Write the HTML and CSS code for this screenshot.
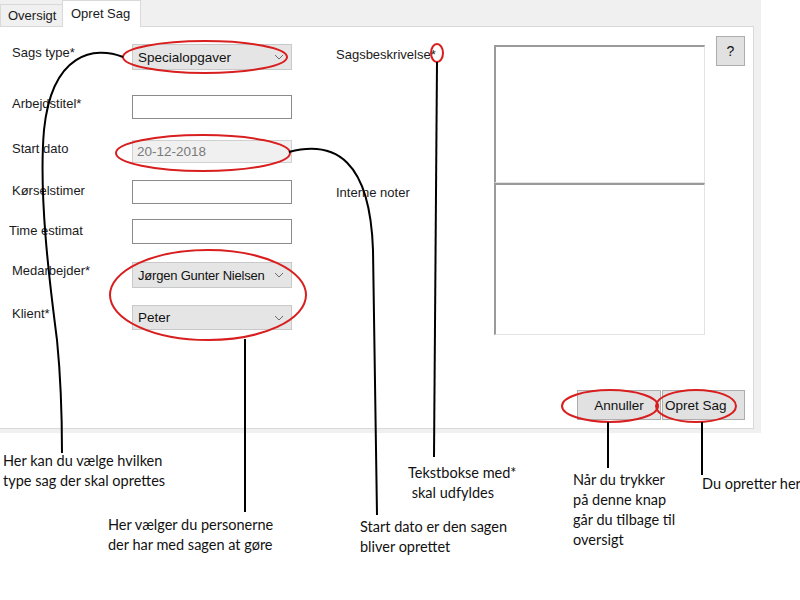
FILE: index.html
```html
<!DOCTYPE html>
<html lang="da">
<head>
<meta charset="utf-8">
<title>Opret Sag</title>
<link rel="stylesheet" href="styles.css">
</head>
<body>
<div class="stage">
  <div class="window">
    <div class="tabs">
      <div class="tab">Oversigt</div>
      <div class="tab active">Opret Sag</div>
    </div>
    <div class="page">
      <div class="top">
        <div class="form-left">
          <div class="row r1"><span class="lbl">Sags type*</span><div class="combo"><span>Specialopgaver</span><svg class="chev" viewBox="0 0 10 6"><path d="M1 1 L5 5 L9 1"/></svg></div></div>
          <div class="row r2"><span class="lbl">Arbejdstitel*</span><div class="text"></div></div>
          <div class="row r3"><span class="lbl">Start dato</span><div class="text disabled">20-12-2018</div></div>
          <div class="row r4"><span class="lbl">Kørselstimer</span><div class="text"></div></div>
          <div class="row r5"><span class="lbl shift">Time estimat</span><div class="text"></div></div>
          <div class="row r6"><span class="lbl">Medarbejder*</span><div class="combo"><span class="tight">Jørgen Gunter Nielsen</span><svg class="chev" viewBox="0 0 10 6"><path d="M1 1 L5 5 L9 1"/></svg></div></div>
          <div class="row r7"><span class="lbl">Klient*</span><div class="combo"><span>Peter</span><svg class="chev" viewBox="0 0 10 6"><path d="M1 1 L5 5 L9 1"/></svg></div></div>
        </div>
        <div class="mid">
          <span class="mlbl m1">Sagsbeskrivelse*</span>
          <span class="mlbl m2">Interne noter</span>
        </div>
        <div class="boxes">
          <div class="area a1"></div>
          <div class="area a2"></div>
        </div>
        <div class="help"><div class="btn qbtn">?</div></div>
      </div>
      <div class="actions">
        <div class="btn act">Annuller</div>
        <div class="btn act create">Opret Sag</div>
      </div>
    </div>
  </div>

  <svg class="marks" viewBox="0 0 800 600" width="800" height="600">
    <g class="red">
      <ellipse cx="205" cy="57" rx="82" ry="16"/>
      <ellipse cx="203" cy="153" rx="87" ry="18"/>
      <ellipse cx="208" cy="295" rx="98" ry="45"/>
      <ellipse cx="437" cy="53" rx="6" ry="9"/>
      <ellipse cx="610" cy="406" rx="48" ry="16"/>
      <ellipse cx="696" cy="406" rx="40" ry="16"/>
    </g>
    <g class="blk">
      <path d="M123 57 C95 46 52 52 44 130 C38 200 52 300 57 340 C61 380 62 420 62 453"/>
      <path d="M289 152 C335 140 370 160 373 250 L377 515"/>
      <path d="M437 62 L434 457"/>
      <path d="M245 339 L245 512"/>
      <path d="M608 422 L608 468"/>
      <path d="M702 422 L702 475"/>
    </g>
  </svg>

  <p class="note n1">Her kan du vælge hvilken<br>type sag der skal oprettes</p>
  <p class="note n2">Her vælger du personerne<br>der har med sagen at gøre</p>
  <p class="note n3">Start dato er den sagen<br>bliver oprettet</p>
  <p class="note n4">Tekstbokse med*<br>&nbsp;skal udfyldes</p>
  <p class="note n5">Når du trykker<br>på denne knap<br>går du tilbage til<br>oversigt</p>
  <p class="note n6">Du opretter her</p>
</div>
</body>
</html>
```
FILE: styles.css
```css
html, body {
  margin: 0;
  padding: 0;
  background: #ffffff;
  overflow: hidden;
}

.stage {
  position: relative;
  width: 800px;
  height: 600px;
  overflow: hidden;
  font-family: "Liberation Sans", Arial, sans-serif;
  font-size: 13px;
  color: #1a1a1a;
}

.window {
  width: 761px;
  height: 433px;
  background: #f0f0f0;
}

.tabs {
  display: flex;
  align-items: flex-end;
  height: 26px;
  position: relative;
  z-index: 2;
}

.tab {
  height: 22px;
  box-sizing: border-box;
  width: 63px;
  border: 1px solid #d9d9d9;
  border-bottom: none;
  background: #f0f0f0;
  padding-left: 7px;
  line-height: 22px;
  font-size: 13px;
}

.tab.active {
  height: 27px;
  width: 79px;
  margin-left: -1px;
  margin-bottom: -1px;
  background: #ffffff;
  padding-left: 8px;
  line-height: 25px;
}

.page {
  width: 754px;
  height: 403px;
  box-sizing: border-box;
  border: 1px solid #d9d9d9;
  border-left: none;
  background: #ffffff;
  display: flex;
  flex-direction: column;
}

.top {
  display: flex;
}

.form-left {
  width: 336px;
  box-sizing: border-box;
  padding-left: 12px;
  display: flex;
  flex-direction: column;
}

.row {
  display: flex;
  align-items: flex-start;
}

.r1 { margin-top: 17px; }
.r2 { margin-top: 25px; }
.r3 { margin-top: 21px; }
.r4 { margin-top: 17px; }
.r5 { margin-top: 15px; }
.r6 { margin-top: 18px; }
.r7 { margin-top: 17px; }

.lbl {
  width: 120px;
  line-height: 15px;
  padding-top: 1px;
}

.r4 .lbl { padding-top: 3px; }
.r5 .lbl { padding-top: 4px; }
.lbl.shift {
  margin-left: -3px;
  width: 123px;
}

.combo, .text {
  width: 160px;
  box-sizing: border-box;
}

.combo {
  height: 26px;
  background: #e5e5e5;
  border: 1px solid #c9c9c9;
  display: flex;
  align-items: center;
  justify-content: space-between;
  padding: 0 7px 0 5px;
  font-size: 13.5px;
  color: #111;
}

.combo .tight {
  font-size: 13px;
  letter-spacing: -0.2px;
}

.r7 .combo { height: 25px; }

.chev {
  width: 10px;
  height: 6px;
  flex: none;
  fill: none;
  stroke: #6a6a6a;
  stroke-width: 1;
}

.text {
  height: 24px;
  background: #ffffff;
  border: 1px solid #8a8a8a;
}

.r5 .text { height: 25px; }

.text.disabled {
  height: 23px;
  background: #f0f0f0;
  border-color: #d0d0d0;
  color: #7a7a7a;
  font-size: 13.5px;
  line-height: 21px;
  padding-left: 4px;
}

.mid {
  width: 158px;
  display: flex;
  flex-direction: column;
}

.mlbl {
  line-height: 15px;
}

.m1 { margin-top: 20px; }
.m2 { margin-top: 123px; }

.boxes {
  width: 211px;
  margin-top: 18px;
  display: flex;
  flex-direction: column;
}

.area {
  box-sizing: border-box;
  background: #ffffff;
  border-top: 2px solid #9a9a9a;
  border-left: 2px solid #9a9a9a;
  border-right: 1px solid #e3e3e3;
  border-bottom: 1px solid #e3e3e3;
}

.a1 { height: 138px; }
.a2 { height: 152px; }

.help {
  margin-left: 11px;
  margin-top: 9px;
}

.btn {
  box-sizing: border-box;
  background: #e1e1e1;
  border: 1px solid #adadad;
  display: flex;
  align-items: center;
  justify-content: center;
  color: #111;
}

.qbtn {
  width: 29px;
  height: 30px;
  font-size: 14px;
}

.actions {
  margin-top: auto;
  display: flex;
  justify-content: flex-end;
  padding: 0 8px 8px 0;
}

.act {
  height: 30px;
  width: 84px;
  font-size: 13.5px;
}

.act.create {
  width: 83px;
  margin-left: 1px;
  justify-content: flex-start;
  padding-left: 2px;
}

.marks {
  position: absolute;
  left: 0;
  top: 0;
  pointer-events: none;
  z-index: 5;
}

.red ellipse {
  fill: none;
  stroke: #d81e1e;
  stroke-width: 2;
}

.blk path {
  fill: none;
  stroke: #000000;
  stroke-width: 2;
}

.note {
  position: absolute;
  margin: 0;
  font-family: Lato, "Noto Sans", sans-serif;
  font-size: 14.5px;
  line-height: 20px;
  color: #111;
  white-space: nowrap;
}

.n1 { left: 3px; top: 451px; }
.n2 { left: 108px; top: 515px; }
.n3 { left: 360px; top: 517px; }
.n4 { left: 408px; top: 463px; }
.n5 { left: 573px; top: 470px; }
.n6 { left: 702px; top: 474px; }
```
